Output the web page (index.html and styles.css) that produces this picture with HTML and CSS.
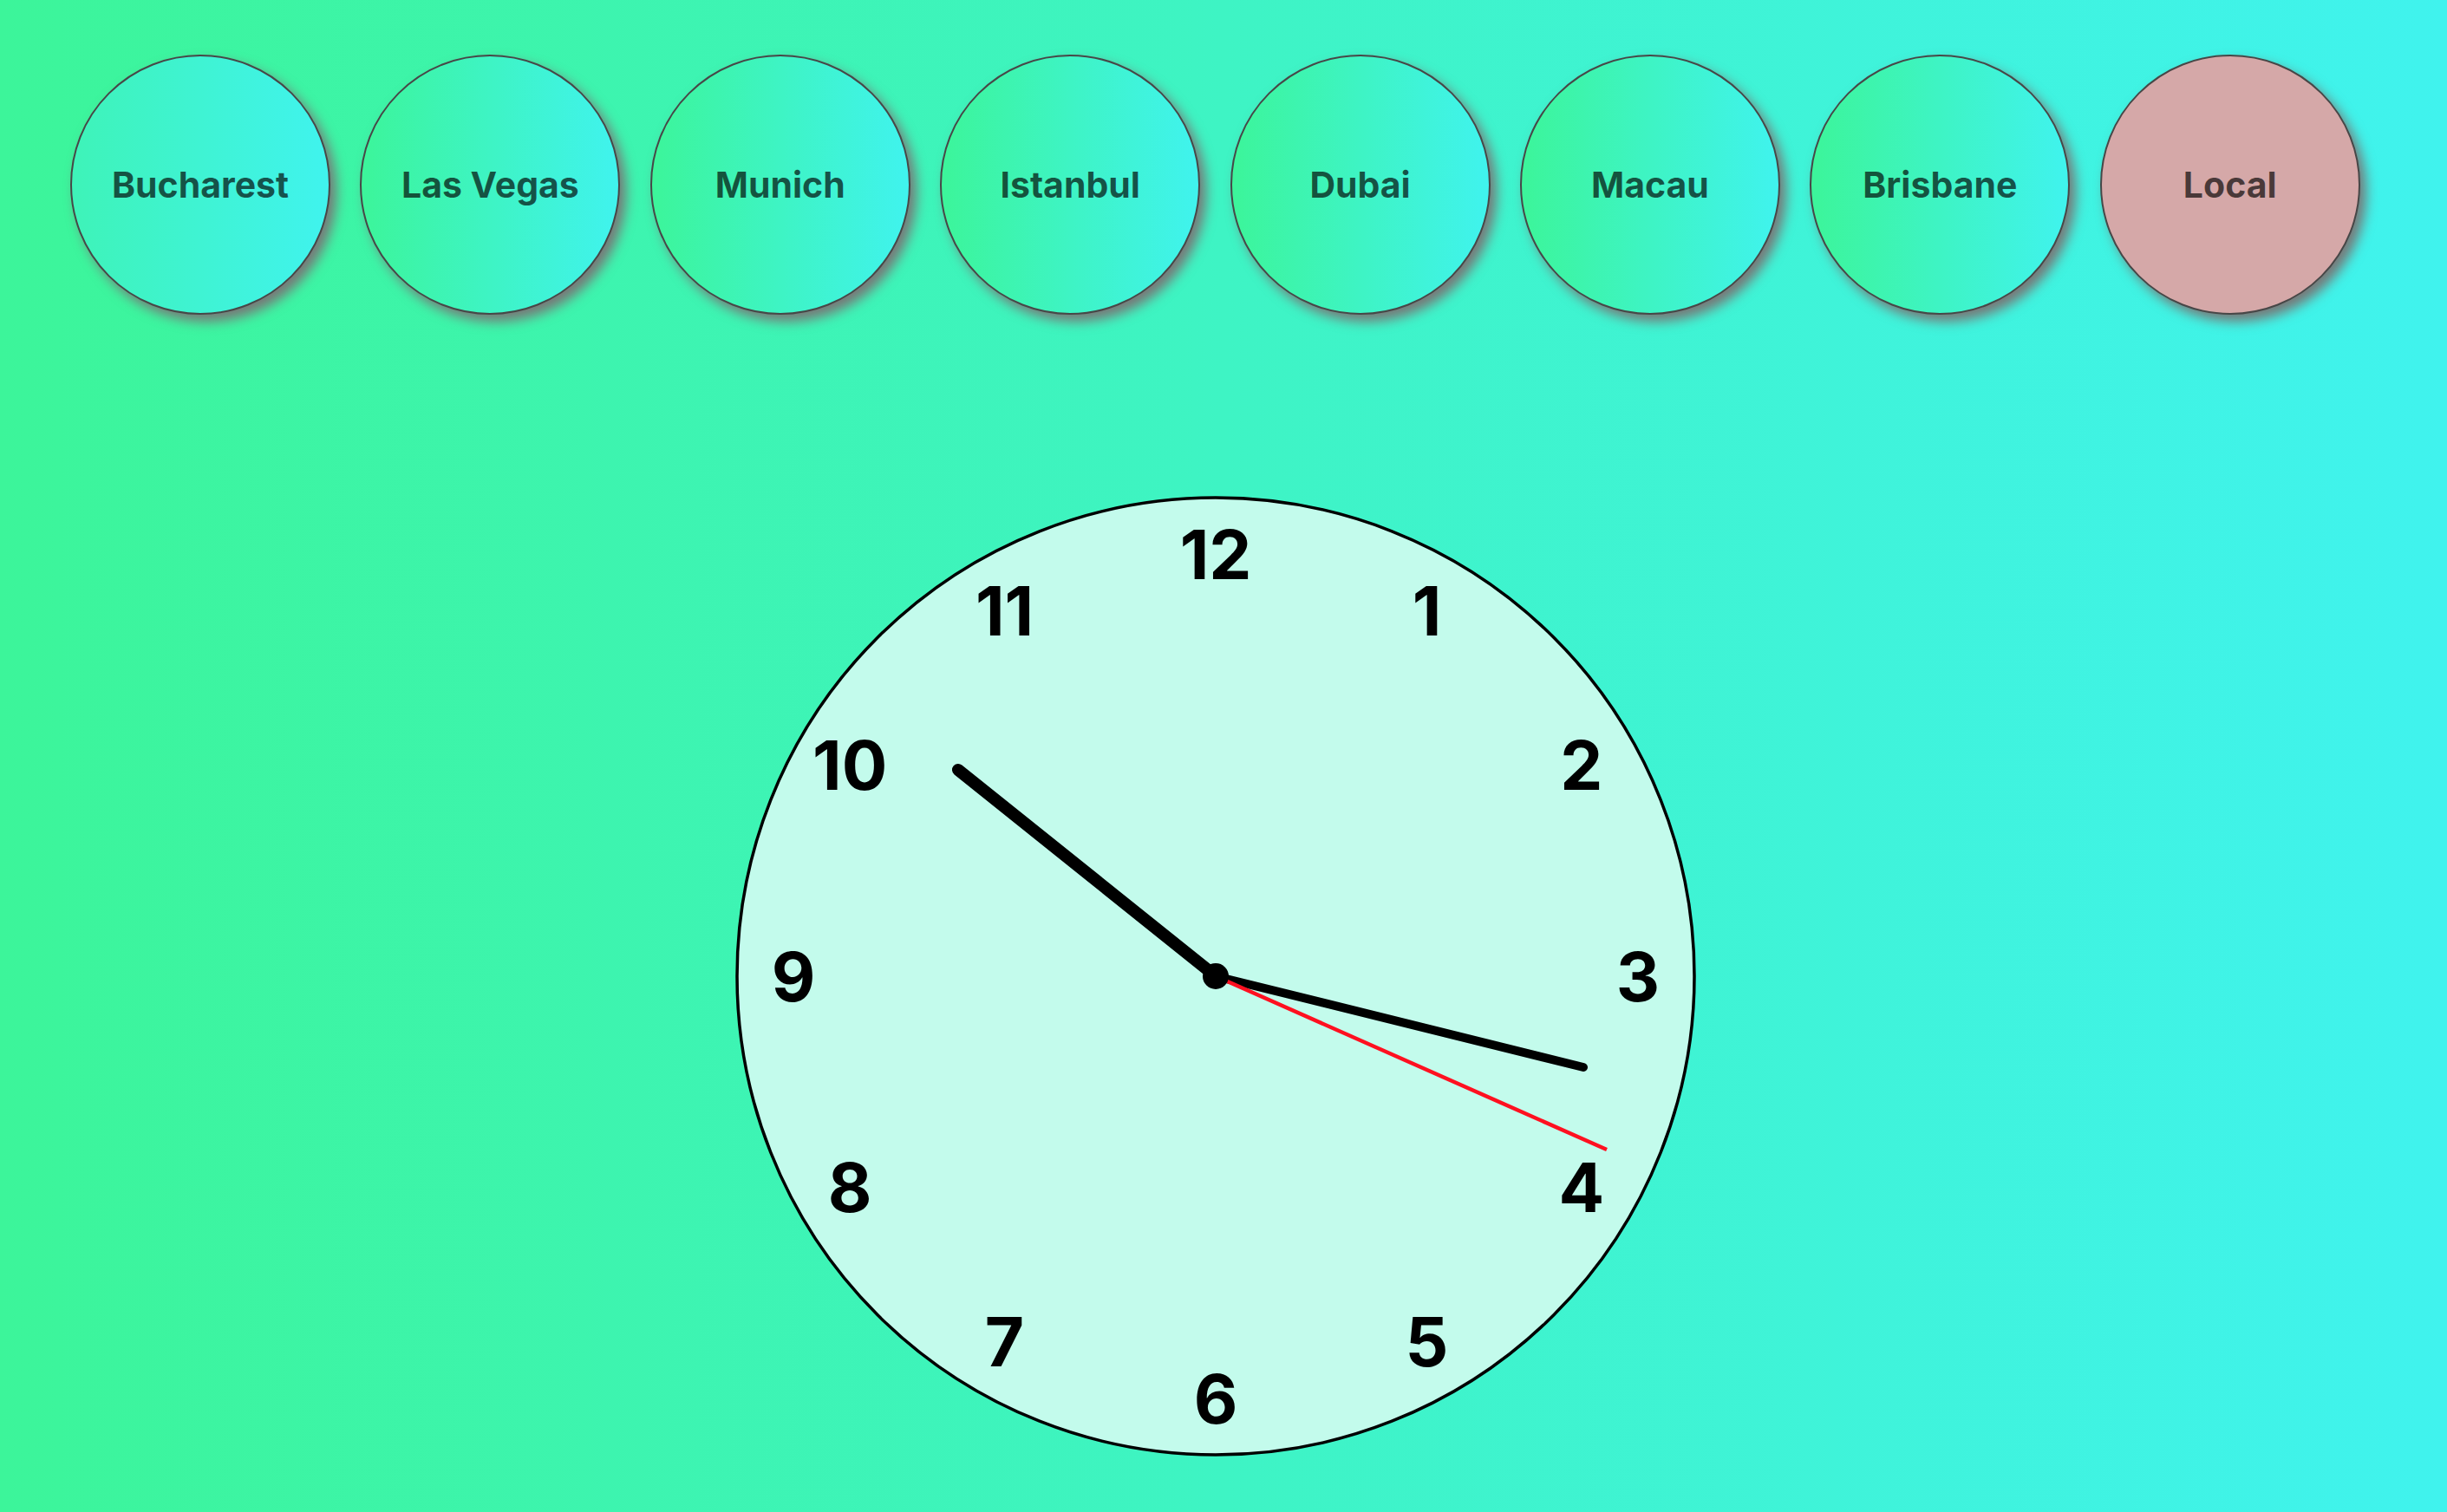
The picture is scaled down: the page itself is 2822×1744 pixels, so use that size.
FILE: index.html
```html
<!DOCTYPE html>
<html>

<head>
    <meta charset="utf-8">
    <title>World Clock</title>
    <link rel="stylesheet" href="styles.css">
</head>

<body>

    <div class="cities">
        <button class="city city-soft" type="button">Bucharest</button>
        <button class="city" type="button">Las Vegas</button>
        <button class="city" type="button">Munich</button>
        <button class="city" type="button">Istanbul</button>
        <button class="city" type="button">Dubai</button>
        <button class="city" type="button">Macau</button>
        <button class="city" type="button">Brisbane</button>
        <button class="city local" type="button">Local</button>
    </div>

    <div class="clock">
        <svg class="face" width="1110" height="1110" viewBox="-555 -555 1110 1110">
            <circle class="rim" cx="0" cy="0" r="552" />
            <!-- numbers sit on a ring of radius 487 -->
            <g class="numbers">
                <text x="0" y="-487">12</text>
                <text x="243.5" y="-421.8">1</text>
                <text x="421.8" y="-243.5">2</text>
                <text x="487" y="0">3</text>
                <text x="421.8" y="243.5">4</text>
                <text x="243.5" y="421.8">5</text>
                <text x="0" y="487">6</text>
                <text x="-243.5" y="421.8">7</text>
                <text x="-421.8" y="243.5">8</text>
                <text x="-487" y="0">9</text>
                <text x="-421.8" y="-243.5">10</text>
                <text x="-243.5" y="-421.8">11</text>
            </g>
            <line class="hand hour" x1="0" y1="0" x2="-297" y2="-238" />
            <line class="hand minute" x1="0" y1="0" x2="424" y2="105" />
            <line class="hand second" x1="0" y1="0" x2="451" y2="200" />
            <circle class="pin" cx="0" cy="0" r="15" />
        </svg>
    </div>

</body>

</html>
```

FILE: styles.css
```css
html,
body {
    margin: 0;
    height: 100%;
}

body {
    background-image: linear-gradient(to right, #3cf59a, #40f3ee);
    font-family: Inter, "Liberation Sans", sans-serif;
    overflow: hidden;
}

.cities {
    display: flex;
    gap: 34.4px;
    padding: 63px 0 0 81px;
}

.city {
    box-sizing: border-box;
    width: 300px;
    height: 300px;
    flex: none;
    border-radius: 50%;
    border: 2px solid #474747;
    background-image: linear-gradient(to right, #3cf59a, #40f3ee);
    box-shadow: 7px 8px 14px #787878;
    font-family: Inter, "Liberation Sans", sans-serif;
    font-size: 41px;
    font-weight: 700;
    color: rgba(0, 0, 0, 0.66);
    cursor: pointer;
}

.city-soft {
    background-image: linear-gradient(to right, #3ef3b8, #40f3ee);
}

.city.local {
    background-image: none;
    background-color: #d5a8a8;
}

.clock {
    display: flex;
    justify-content: center;
    padding-right: 18px;
    margin-top: 208px;
}

.face {
    display: block;
}

.rim {
    fill: #c3fbec;
    stroke: #000;
    stroke-width: 3.5;
}

.numbers text {
    font-family: Inter, "Liberation Sans", sans-serif;
    font-size: 78px;
    font-weight: 700;
    fill: #000;
    text-anchor: middle;
    dominant-baseline: central;
}

.hand {
    stroke: #000;
    stroke-linecap: round;
}

.hour {
    stroke-width: 14;
}

.minute {
    stroke-width: 10;
}

.second {
    stroke: #ff1020;
    stroke-width: 4.5;
    stroke-linecap: butt;
}

.pin {
    fill: #000;
}
```
